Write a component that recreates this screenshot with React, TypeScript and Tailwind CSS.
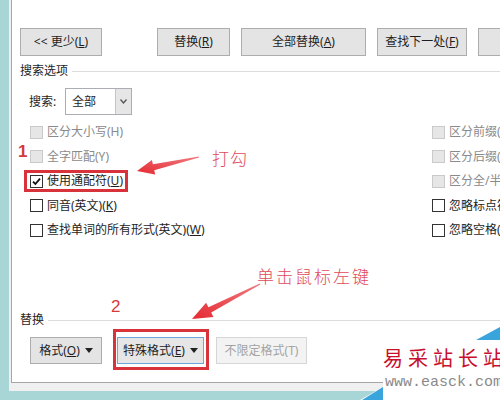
import React from 'react';

const ui = "font-['Noto_Sans','Noto_Sans_CJK_SC',sans-serif]";

function Check({ checked, disabled }: { checked?: boolean; disabled?: boolean }) {
  if (disabled) {
    return <span className="w-[13px] h-[13px] shrink-0 border border-[#cacaca] bg-[#e6e6e6]" />;
  }
  return (
    <span className="w-[13px] h-[13px] shrink-0 border border-[#333333] bg-white flex items-center justify-center">
      {checked && (
        <svg width="9" height="9" viewBox="0 0 9 9">
          <path d="M1 4.6 L3.4 7 L8 1.6" fill="none" stroke="#111" strokeWidth="1.8" />
        </svg>
      )}
    </span>
  );
}

function Option({ children, checked, disabled }: { children: React.ReactNode; checked?: boolean; disabled?: boolean }) {
  return (
    <div className="h-[24.5px] flex items-center gap-[4px] whitespace-nowrap">
      <Check checked={checked} disabled={disabled} />
      <span className={disabled ? 'text-[#8a8a8a]' : 'text-[#1e1e1e]'}>{children}</span>
    </div>
  );
}

function Btn({ children, w, disabled }: { children: React.ReactNode; w: string; disabled?: boolean }) {
  return (
    <div
      className={`${w} h-full shrink-0 flex items-center justify-center whitespace-nowrap border ${
        disabled ? 'border-[#d6d6d6] bg-[#f3f3f3] text-[#a3a3a3]' : 'border-[#adadad] bg-[#e4e4e4] text-[#1e1e1e]'
      }`}
    >
      {children}
    </div>
  );
}

function Caret() {
  return (
    <svg width="8" height="5" viewBox="0 0 8 5" className="ml-[5px]">
      <path d="M0 0 H8 L4 5 Z" fill="#222" />
    </svg>
  );
}

function Group({ title }: { title: string }) {
  return (
    <div className="h-[16px] flex items-center gap-[4px] text-[#1e1e1e]">
      <span>{title}</span>
      <span className="flex-1 border-t border-[#dcdcdc]" />
    </div>
  );
}

// tapered annotation arrow, tail -> tip
function arrowPoints(x1: number, y1: number, x2: number, y2: number, headLen: number, headW: number, shaftW: number) {
  const len = Math.hypot(x2 - x1, y2 - y1);
  const dx = (x2 - x1) / len;
  const dy = (y2 - y1) / len;
  const nx = -dy;
  const ny = dx;
  const bx = x2 - dx * headLen;
  const by = y2 - dy * headLen;
  const p = (x: number, y: number, s: number) => `${(x + nx * s).toFixed(1)},${(y + ny * s).toFixed(1)}`;
  return [p(x1, y1, 0.6), p(bx, by, shaftW / 2), p(bx, by, headW / 2), `${x2},${y2}`, p(bx, by, -headW / 2), p(bx, by, -shaftW / 2), p(x1, y1, -0.6)].join(' ');
}

function Annotations() {
  return (
    <>
      <svg className="absolute inset-0 pointer-events-none" width="500" height="400">
        <defs>
          <linearGradient id="a1" x1="1" y1="0" x2="0" y2="1">
            <stop offset="0" stopColor="#f07a80" />
            <stop offset="1" stopColor="#e52a32" />
          </linearGradient>
        </defs>
        <polygon points={arrowPoints(199, 157, 137, 171, 17, 15, 6)} fill="url(#a1)" />
        <polygon points={arrowPoints(260, 284, 192, 319, 20, 16, 6)} fill="url(#a1)" />
      </svg>
      <div className="absolute left-[24px] top-[170px] w-[104px] h-[22px] border-[3px] border-[#d8333b]" />
      <div className="absolute left-[113px] top-[329px] w-[96px] h-[41px] border-[3px] border-[#d8333b]" />
      <span className="absolute left-[18px] top-[144px] text-[17px] font-bold text-[#d43a3a] font-['Liberation_Sans',sans-serif]">1</span>
      <span className="absolute left-[111px] top-[299px] text-[17px] text-[#d43a3a] font-['Liberation_Sans',sans-serif]">2</span>
      <span className="absolute left-[212px] top-[150px] text-[17px] tracking-[1px] text-[#e04a5c] font-light font-['Noto_Sans_CJK_SC',sans-serif]">打勾</span>
      <span className="absolute left-[257px] top-[268px] text-[17px] tracking-[2px] text-[#e04a5c] font-light font-['Noto_Sans_CJK_SC',sans-serif]">单击鼠标左键</span>
    </>
  );
}

function Watermark() {
  return (
    <div className="absolute left-[360px] top-[326px] w-[140px] h-[74px]">
      <svg className="absolute inset-0" width="140" height="74">
        <polygon points="0,74 23,61 23,14 140,14 140,74" fill="#ffffff" />
        <polygon points="2,74 23,61 23,74" fill="#3aa4dc" />
        <polygon points="116,14 140,1 140,14" fill="#3aa4dc" />
      </svg>
      <div className="absolute left-[23px] top-[20px] whitespace-nowrap text-[20px] leading-[24px] tracking-[5px] text-[#c8102e] font-['Noto_Sans_CJK_SC',serif]">
        易采站长站
      </div>
      <div className="absolute left-[25px] top-[49px] whitespace-nowrap text-[15px] leading-[16px] text-[#8a8a8a] font-['Liberation_Mono',monospace]">
        www.easck.com
      </div>
    </div>
  );
}

export default function App() {
  return (
    <div className={`relative w-[500px] h-[400px] overflow-hidden bg-[#a8d5d5] pl-[9px] text-[12px] leading-[16px] ${ui}`}>
      <div className="h-[391px] bg-[#f0f0f0] pl-[2px] pb-[8px]">
        <div className="h-[383px] bg-white border-l border-b border-[#a6a6a6] pl-[8px] pt-[28px] flex flex-col">
          {/* top buttons */}
          <div className="h-[28px] flex">
            <Btn w="w-[82px]">
              &lt;&lt; 更少(<u>L</u>)
            </Btn>
            <div className="w-[55px] shrink-0" />
            <div className="flex gap-[11px] h-full">
              <Btn w="w-[73px]">
                替换(<u>R</u>)
              </Btn>
              <Btn w="w-[125px]">
                全部替换(<u>A</u>)
              </Btn>
              <Btn w="w-[90px]">
                查找下一处(<u>F</u>)
              </Btn>
              <Btn w="w-[80px]">取消</Btn>
            </div>
          </div>

          <div className="mt-[7px]">
            <Group title="搜索选项" />
          </div>

          {/* search scope */}
          <div className="mt-[9px] h-[27px] flex items-center pl-[9px]">
            <span className="w-[36px] text-[#1e1e1e]">搜索:</span>
            <div className="w-[67px] h-[27px] border border-[#abadb3] bg-white flex">
              <span className="flex-1 flex items-center pl-[6px] text-[#1e1e1e]">全部</span>
              <span className="w-[16px] bg-[#e6e6e6] border-l border-[#c4c4c4] flex items-center justify-center">
                <svg width="7" height="5" viewBox="0 0 7 5">
                  <path d="M0.5 0.5 L3.5 4 L6.5 0.5" fill="none" stroke="#555" strokeWidth="1.3" />
                </svg>
              </span>
            </div>
          </div>

          {/* options */}
          <div className="mt-[5px] flex pl-[10px]">
            <div className="w-[402px] shrink-0 flex flex-col">
              <Option disabled>区分大小写(H)</Option>
              <Option disabled>全字匹配(Y)</Option>
              <Option checked>
                使用通配符(<u>U</u>)
              </Option>
              <Option>
                同音(英文)(<u>K</u>)
              </Option>
              <Option>
                查找单词的所有形式(英文)(<u>W</u>)
              </Option>
            </div>
            <div className="flex flex-col">
              <Option disabled>区分前缀(X)</Option>
              <Option disabled>区分后缀(T)</Option>
              <Option disabled>区分全/半角(M)</Option>
              <Option>
                忽略标点符号(<u>S</u>)
              </Option>
              <Option>
                忽略空格(<u>W</u>)
              </Option>
            </div>
          </div>

          <div className="flex-1" />

          <Group title="替换" />
          <div className="mt-[9px] mb-[18px] h-[27px] flex pl-[10px]">
            <Btn w="w-[72px]">
              格式(<u>O</u>)
              <Caret />
            </Btn>
            <div className="w-[15px] shrink-0" />
            <div className="w-[87px] h-full shrink-0 flex items-center justify-center whitespace-nowrap border border-[#6ea4dc] bg-[#e6e6e6] text-[#1e1e1e]">
              特殊格式(<u>E</u>)
              <Caret />
            </div>
            <div className="w-[12px] shrink-0" />
            <Btn w="w-[91px]" disabled>
              不限定格式(T)
            </Btn>
          </div>
        </div>
      </div>

      <Annotations />
      <Watermark />
    </div>
  );
}
